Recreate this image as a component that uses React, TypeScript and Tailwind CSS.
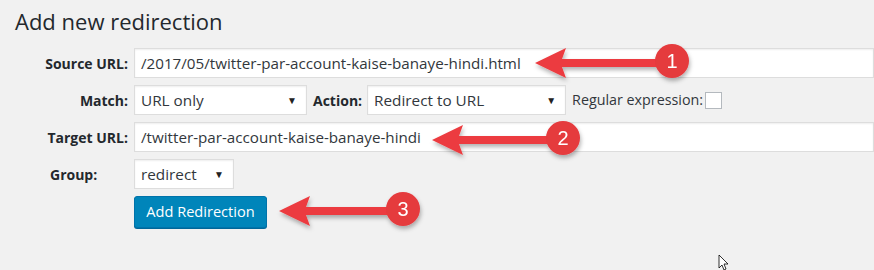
import React from 'react';

const font = { fontFamily: '"Open Sans", "Noto Sans", Arial, sans-serif' };

const Label: React.FC<{ text: string }> = ({ text }) => (
    <div className="w-[129px] shrink-0 text-right pr-[1px] text-[14px] font-bold text-[#23282d]">{text}</div>
);

const SelectBox: React.FC<{ value: string; width: string }> = ({ value, width }) => (
    <div className={`${width} h-[30px] bg-white border border-[#ddd] shadow-[inset_0_1px_2px_rgba(0,0,0,0.07)] flex items-center justify-between pl-[6px] pr-[9px] text-[15.3px] text-[#32373c]`}>
        <span>{value}</span>
        <span className="text-[10px] text-[#222]">▼</span>
    </div>
);

const TextInput: React.FC<{ value: string }> = ({ value }) => (
    <div className="w-[760px] h-[30px] bg-white border border-[#ddd] shadow-[inset_0_1px_2px_rgba(0,0,0,0.07)] flex items-center pl-[6px] text-[15.2px] text-[#32373c] whitespace-nowrap">
        {value}
    </div>
);

const Arrow: React.FC<{ tipX: number; y: number; cx: number; num: string }> = ({ tipX, y, cx, num }) => (
    <g filter="url(#shadow)">
        <polygon
            points={`${tipX},${y} ${tipX + 31},${y - 15} ${tipX + 27},${y - 4} ${cx},${y - 4} ${cx},${y + 4} ${tipX + 27},${y + 4} ${tipX + 31},${y + 15}`}
            fill="#ec3b3f"
        />
        <circle cx={cx} cy={y - 2} r={17} fill="#e53a3e" />
        <text x={cx} y={y + 5} textAnchor="middle" fill="#fff" fontSize="20" fontFamily="Arial, 'Liberation Sans', sans-serif">{num}</text>
    </g>
);

export default function App() {
    return (
        <div className="relative w-[874px] h-[270px] bg-[#f1f1f1] overflow-hidden" style={font}>
            <h1 className="pl-[15px] pt-[6px] text-[22px] leading-[30px] text-[#23282d]">Add new redirection</h1>

            <div className="mt-[12px] flex flex-col gap-[7px]">
                <div className="flex items-center gap-[5px]">
                    <Label text="Source URL:" />
                    <TextInput value="/2017/05/twitter-par-account-kaise-banaye-hindi.html" />
                </div>
                <div className="flex items-center gap-[5px]">
                    <Label text="Match:" />
                    <SelectBox value="URL only" width="w-[173px]" />
                    <span className="ml-[1px] text-[14px] font-bold text-[#23282d]">Action:</span>
                    <SelectBox value="Redirect to URL" width="w-[199px]" />
                    <span className="ml-[1px] text-[14.3px] text-[#32373c]">Regular expression:</span>
                    <div className="w-[17px] h-[17px] bg-white border border-[#b4b9be] -ml-[3px]" />
                </div>
                <div className="flex items-center gap-[5px]">
                    <Label text="Target URL:" />
                    <TextInput value="/twitter-par-account-kaise-banaye-hindi" />
                </div>
                <div className="flex items-center gap-[5px]">
                    <div className="w-[129px] shrink-0 pl-[50px] text-[14px] font-bold text-[#23282d]">Group:</div>
                    <SelectBox value="redirect" width="w-[100px]" />
                </div>
                <div className="flex pl-[134px]">
                    <button className="h-[32px] w-[133px] bg-[#0085ba] border border-[#0073aa] rounded-[3px] text-white text-[14.6px] shadow-[0_1px_0_#006799]">
                        Add Redirection
                    </button>
                </div>
            </div>

            <svg className="absolute left-0 top-0" width="874" height="270">
                <defs>
                    <filter id="shadow" x="-10%" y="-40%" width="130%" height="200%">
                        <feDropShadow dx="1" dy="3" stdDeviation="2" floodColor="#000" floodOpacity="0.3" />
                    </filter>
                </defs>
                <Arrow tipX={535} y={63} cx={672} num="1" />
                <Arrow tipX={432} y={140} cx={563} num="2" />
                <Arrow tipX={279} y={211} cx={403} num="3" />
                <path d="M719 255 L719 268 L722 265 L724 270 L726 269 L724 264 L728 264 Z" fill="#fff" stroke="#000" strokeWidth="0.8" />
            </svg>
        </div>
    );
}
